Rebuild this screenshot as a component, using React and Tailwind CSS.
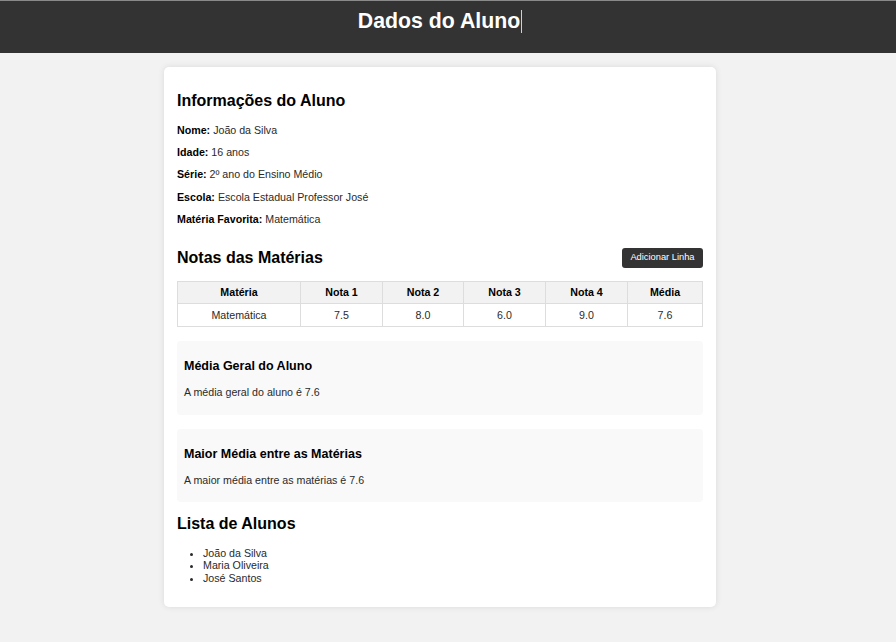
// Student data page: header, info card, grades table and summaries
const INFO = [
  { label: 'Nome:', value: 'João da Silva' },
  { label: 'Idade:', value: '16 anos' },
  { label: 'Série:', value: '2º ano do Ensino Médio' },
  { label: 'Escola:', value: 'Escola Estadual Professor José' },
  { label: 'Matéria Favorita:', value: 'Matemática' },
];

const COLUMNS = [
  { label: 'Matéria', width: 'w-[123px]' },
  { label: 'Nota 1', width: 'w-[82px]' },
  { label: 'Nota 2', width: 'w-[81px]' },
  { label: 'Nota 3', width: 'w-[82px]' },
  { label: 'Nota 4', width: 'w-[82px]' },
  { label: 'Média', width: '' },
];

const ROWS = [['Matemática', '7.5', '8.0', '6.0', '9.0', '7.6']];

const STUDENTS = ['João da Silva', 'Maria Oliveira', 'José Santos'];

const SummaryBox = ({ title, text }) => (
  <div className="bg-[#f9f9f9] rounded-[4px] px-[7px] pt-[18px] pb-[16.5px]">
    <h3 className="text-[12.5px] leading-[15px] font-bold text-black">{title}</h3>
    <p className="mt-[12px] text-[10.67px] leading-[12px] text-[#2a2a2a]">{text}</p>
  </div>
);

export default function App() {
  return (
    <div className="min-h-[642px] bg-[#f2f2f2] font-['Liberation_Sans',Arial,sans-serif] text-[#2a2a2a]">
      {/* Header */}
      <header className="h-[53px] bg-[#333] border-t border-[#8a8a8a] pr-4 pt-[8px] flex items-start justify-center">
        <h1 className="text-[21.3px] leading-[24px] font-bold text-white flex items-center">
          Dados do Aluno
          <span className="inline-block w-px h-[23px] bg-[#d0d0d0] ml-px" />
        </h1>
      </header>

      <main className="pr-4 pt-[14px] pb-[36px] flex justify-center">
        <div className="w-[552px] bg-white rounded-[5px] shadow-[0_0_6px_rgba(0,0,0,0.1)] px-[13px] pt-[13px] pb-[23px]">
          {/* Informações */}
          <h2 className="mt-[12px] text-[16px] leading-[18px] font-bold text-black">Informações do Aluno</h2>
          <div className="mt-[14px] flex flex-col gap-[10.2px]">
            {INFO.map(item => (
              <p key={item.label} className="text-[10.67px] leading-[12px]">
                <strong className="font-bold text-black">{item.label}</strong> {item.value}
              </p>
            ))}
          </div>

          {/* Notas */}
          <div className="mt-[23px] h-[20px] flex items-center justify-between">
            <h2 className="text-[16px] leading-[18px] font-bold text-black">Notas das Matérias</h2>
            <button className="h-[20px] px-[8.5px] bg-[#333] text-white text-[9.3px] rounded-[3px]">
              Adicionar Linha
            </button>
          </div>

          <table className="mt-[13px] w-full border-collapse text-[10.67px] text-center">
            <thead>
              <tr className="h-[22px] bg-[#f2f2f2]">
                {COLUMNS.map(col => (
                  <th key={col.label} className={`${col.width} border border-[#ddd] font-bold text-black`}>
                    {col.label}
                  </th>
                ))}
              </tr>
            </thead>
            <tbody>
              {ROWS.map(row => (
                <tr key={row[0]} className="h-[23.5px]">
                  {row.map((cell, i) => (
                    <td key={i} className="border border-[#ddd]">{cell}</td>
                  ))}
                </tr>
              ))}
            </tbody>
          </table>

          {/* Resumos */}
          <div className="mt-[14px] flex flex-col gap-[14px]">
            <SummaryBox title="Média Geral do Aluno" text="A média geral do aluno é 7.6" />
            <SummaryBox title="Maior Média entre as Matérias" text="A maior média entre as matérias é 7.6" />
          </div>

          {/* Lista */}
          <h2 className="mt-[13px] text-[16px] leading-[18px] font-bold text-black">Lista de Alunos</h2>
          <ul className="mt-[14px] pl-[26px] list-disc text-[10.67px] leading-[12.2px]">
            {STUDENTS.map(name => (
              <li key={name}>{name}</li>
            ))}
          </ul>
        </div>
      </main>
    </div>
  );
}
